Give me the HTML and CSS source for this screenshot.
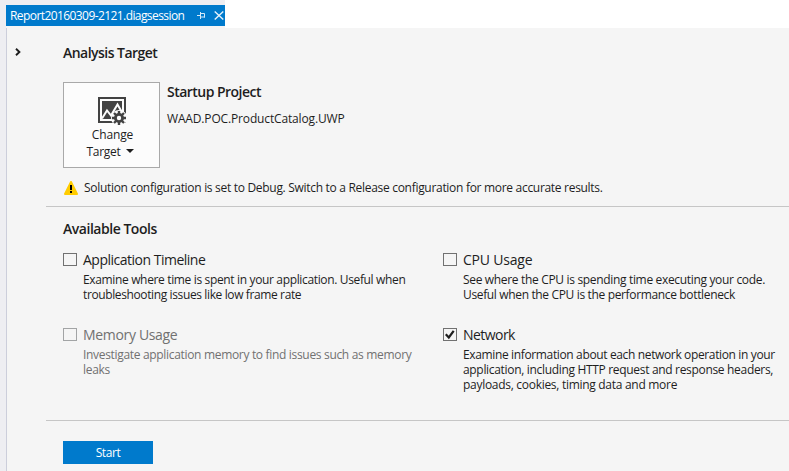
FILE: index.html
```html
<!DOCTYPE html>
<html lang="en">
<head>
<meta charset="utf-8">
<title>Report20160309-2121.diagsession</title>
<link rel="stylesheet" href="styles.css">
</head>
<body>
<div class="window">
  <div class="gutter"></div>
  <div class="document">
    <header class="tabs">
      <div class="tab">
        <span class="tab-name">Report20160309-2121.diagsession</span>
        <svg class="pin" width="8" height="7" viewBox="0 0 8 7"><path d="M0 3.500h3M3.500 0v7M4 1.500h3.500v4M4 5h4" fill="none" stroke="#d5e9f8"/></svg>
        <svg class="close" width="10" height="9" viewBox="0 0 10 9"><path d="M.7.5l8.600 8M9.300.5l-8.600 8" fill="none" stroke="#e6f2fb" stroke-width="1.400"/></svg>
      </div>
    </header>
    <main class="page">
      <div class="rail"><svg width="6" height="8" viewBox="0 0 6 8"><path d="M1 .8L4.400 4 1 7.200" fill="none" stroke="#1e1e1e" stroke-width="1.900"/></svg></div>
      <div class="content">
        <section class="analysis">
          <h2 class="h-analysis">Analysis Target</h2>
          <div class="target">
            <button class="change">
              <svg width="28" height="28" viewBox="0 0 28 28">
                <path d="M1 1h26v24H1z" fill="#fcfcfc" stroke="#424242" stroke-width="2"/>
                <path d="M4 4h20v18H4z" fill="#424242"/>
                <path d="M4 21.500l5-8 4 5 6.500-11 7 12" fill="none" stroke="#fcfcfc" stroke-width="2"/>
                <circle cx="21" cy="21" r="8" fill="#fcfcfc"/>
                <circle cx="21" cy="21" r="3.600" fill="none" stroke="#424242" stroke-width="2.800"/>
                <path d="M21 14v3M21 25v3M14 21h3M25 21h3M16 16l2 2M24 24l2 2M26 16l-2 2M18 24l-2 2" stroke="#424242" stroke-width="2.400"/>
              </svg>
              <span class="c-change">Change</span>
              <span class="c-target">Target<svg class="caret" width="8" height="4" viewBox="0 0 8 4"><path d="M0 0h8L4 4z" fill="#1e1e1e"/></svg></span>
            </button>
            <div class="project">
              <h2 class="h-startup">Startup Project</h2>
              <p class="project-name">WAAD.POC.ProductCatalog.UWP</p>
            </div>
          </div>
          <div class="warning">
            <svg width="14" height="14" viewBox="0 0 14 14"><path d="M7 1L13 13H1z" fill="#fc0" stroke="#fc0" stroke-width="2" stroke-linejoin="round"/><path d="M7 4v5M7 10v2" stroke="#000" stroke-width="2"/></svg>
            <span class="warn-text">Solution configuration is set to Debug. Switch to a Release configuration for more accurate results.</span>
          </div>
        </section>
        <section class="tools">
          <h2 class="h-tools">Available Tools</h2>
          <div class="grid">
            <article class="tool">
              <span class="box"></span>
              <div><h3 class="n1">Application Timeline</h3><p><span class="a1">Examine where time is spent in your application. Useful when</span><br><span class="a2">troubleshooting issues like low frame rate</span></p></div>
            </article>
            <article class="tool">
              <span class="box"></span>
              <div><h3 class="n2">CPU Usage</h3><p><span class="b1">See where the CPU is spending time executing your code.</span><br><span class="b2">Useful when the CPU is the performance bottleneck</span></p></div>
            </article>
            <article class="tool disabled">
              <span class="box"></span>
              <div><h3 class="n3">Memory Usage</h3><p><span class="c1">Investigate application memory to find issues such as memory</span><br><span class="c2">leaks</span></p></div>
            </article>
            <article class="tool">
              <span class="box"><svg width="12" height="11" viewBox="0 0 12 11"><path d="M1.800 5.300L4.800 8.500 9.700 1.800" fill="none" stroke="#1e1e1e" stroke-width="2.200"/></svg></span>
              <div><h3 class="n4">Network</h3><p><span class="d1">Examine information about each network operation in your</span><br><span class="d2">application, including HTTP request and response headers,</span><br><span class="d3">payloads, cookies, timing data and more</span></p></div>
            </article>
          </div>
        </section>
        <footer><button class="start">Start</button></footer>
      </div>
    </main>
  </div>
</div>
</body>
</html>
```
FILE: styles.css
```css
* { box-sizing: border-box; }
body { margin: 0; background: #fff; color: #1e1e1e; font: 12px/15px "Open Sans", "Noto Sans", sans-serif; overflow: hidden; }
h2, h3, p { margin: 0; font-weight: 400; white-space: nowrap; }
button { font: inherit; color: inherit; padding: 0; border-radius: 0; }
span { white-space: nowrap; }
svg { flex: none; }
.window { display: flex; width: 789px; height: 471px; }
.gutter { flex: none; width: 6px; background: #eeeef2; }
.document { flex: 1; min-width: 0; display: flex; flex-direction: column; }
.tabs { height: 28px; width: 219px; border-top: 5px solid #eeeef2; background: #f5f5f5; }
.tab { height: 21px; background: #007acc; color: #fff; display: flex; align-items: center; padding-left: 4px; }
.tab-name { width: 176px; letter-spacing: -.58px; }
.pin { margin-left: 11px; }
.close { margin-left: 9px; }
.page { flex: 1; background: #f5f5f5; border-left: 1px solid #cccedb; display: flex; }
.rail { flex: none; width: 39px; padding: 20px 0 0 8px; line-height: 0; }
.content { flex: 1; min-width: 0; }
.analysis { height: 179px; border-bottom: 1px solid #c6c6c6; padding: 15px 0 0 17px; }
h2 { font-size: 14px; line-height: 20px; font-weight: 600; letter-spacing: -.53px; }
.h-tools { letter-spacing: -.47px; }
.target { display: flex; margin-top: 19px; gap: 7px; }
.change { width: 97px; height: 86px; border: 1px solid #a9a9a9; background: #fcfcfc; display: flex; flex-direction: column; align-items: center; justify-content: flex-start; padding-top: 14px; }
.change > span { height: 17px; line-height: 17px; }
.change > svg { margin-bottom: 1px; margin-left: 1px; }
.c-change { letter-spacing: -.15px; margin-left: 2px; }
.c-target { letter-spacing: -.3px; margin-right: 2px; }
.caret { margin-left: 6px; vertical-align: 3px; }
.project-name { margin-top: 9px; letter-spacing: -.15px; }
.warning { display: flex; align-items: center; margin-top: 12px; padding-left: 1px; gap: 6px; }
.warn-text { letter-spacing: -.3px; }
.tools { height: 214px; border-bottom: 1px solid #c6c6c6; padding: 12px 0 0 17px; }
.grid { display: grid; grid-template-columns: 380px 1fr; grid-auto-rows: 75px; margin-top: 12px; }
.tool { display: flex; gap: 6px; min-width: 0; }
.box { width: 14px; height: 13px; border: 1px solid #717171; margin-top: 2px; flex: none; line-height: 0; }
h3 { font-size: 14px; line-height: 18px; margin-bottom: 3px; }
.n1 { letter-spacing: -.5px; }
.n2 { letter-spacing: -.2px; }
.n3 { letter-spacing: -.33px; }
.n4 { letter-spacing: -.55px; }
.a1 { letter-spacing: -.35px; }
.a2 { letter-spacing: -.38px; }
.b1 { letter-spacing: -.33px; }
.b2 { letter-spacing: -.35px; }
.c1, .c2, .d2 { letter-spacing: -.32px; }
.d1 { letter-spacing: -.36px; }
.d3 { letter-spacing: -.29px; }
.disabled { color: #717171; }
.disabled .box { border-color: #a2a4a5; }
footer { padding: 20px 0 0 17px; }
.start { width: 90px; height: 23px; background: #007acc; border: 0; color: #fff; display: block; letter-spacing: -.4px; }
```
